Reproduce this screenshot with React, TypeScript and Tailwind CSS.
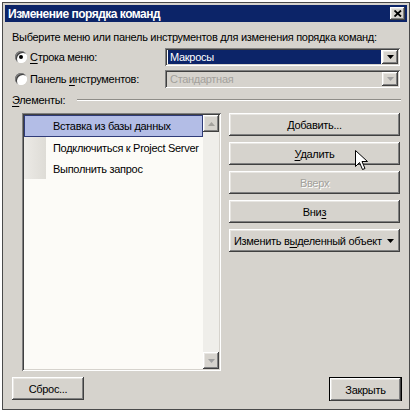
import React from "react";

const raised =
  "shadow-[inset_-1px_-1px_#404040,inset_1px_1px_#ffffff,inset_-2px_-2px_#808080,inset_2px_2px_#e8e6e2]";
const sunken =
  "shadow-[inset_1px_1px_#808080,inset_-1px_-1px_#ffffff,inset_2px_2px_#404040,inset_-2px_-2px_#d6d3cd]";

function U({ children }: { children: React.ReactNode }) {
  return <span className="underline underline-offset-[1.5px]">{children}</span>;
}

function Arrow({ disabled }: { disabled?: boolean }) {
  return (
    <svg width="7" height="4" viewBox="0 0 7 4" className="shrink-0">
      <path d="M0 0h7L3.5 4z" fill={disabled ? "#a0a0a0" : "#000"} />
    </svg>
  );
}

function Radio({ checked }: { checked?: boolean }) {
  return (
    <div className="w-[12px] h-[12px] shrink-0 rounded-full bg-white relative shadow-[inset_1px_1px_#808080,inset_-1px_-1px_#ffffff,inset_2px_2px_#404040]">
      {checked && (
        <div className="absolute left-[4px] top-[4px] w-[4px] h-[4px] rounded-full bg-black" />
      )}
    </div>
  );
}

function Combo({ text, disabled }: { text: string; disabled?: boolean }) {
  return (
    <div className={`w-[235px] h-[18px] flex p-[2px] ${sunken} ${disabled ? "bg-[#d6d3cd]" : "bg-white"}`}>
      <div className="flex-1 flex items-center pl-[1px]">
        <div
          className={`h-full flex-1 flex items-center pl-[2px] mr-[1px] ${
            disabled ? "text-[#a3a19c]" : "bg-[#0c2468] text-white"
          }`}
        >
          {text}
        </div>
      </div>
      <div className={`w-[16px] h-full flex items-center justify-center bg-[#d6d3cd] ${raised}`}>
        <Arrow disabled={disabled} />
      </div>
    </div>
  );
}

function Btn({
  children,
  disabled,
  className = "",
}: {
  children: React.ReactNode;
  disabled?: boolean;
  className?: string;
}) {
  return (
    <div
      className={`h-[23px] flex items-center justify-center whitespace-nowrap bg-[#d6d3cd] ${raised} ${
        disabled ? "text-[#a3a19c] [text-shadow:1px_1px_#ffffff]" : "text-black"
      } ${className}`}
    >
      {children}
    </div>
  );
}

export default function App() {
  return (
    <div
      className="w-[412px] h-[414px] bg-white pt-[2px] pl-[2px] relative text-[11px] tracking-[-0.3px] leading-[14px] text-black"
      style={{ fontFamily: '"Liberation Sans", Arial, sans-serif' }}
    >
      <div className="w-[408px] h-[408px] border border-[#4a4a4a] bg-[#d6d3cd] p-[2px] flex flex-col">
        {/* title bar */}
        <div className="h-[17px] bg-[#0c2468] flex items-center justify-between pl-[3px] pr-[2px]">
          <span className="text-white font-bold text-[12px] tracking-[-0.5px]">Изменение порядка команд</span>
          <div className={`w-[15px] h-[13px] bg-[#d6d3cd] flex items-center justify-center ${raised}`}>
            <svg width="8" height="7" viewBox="0 0 8 7">
              <path d="M0.5 0.5L7 6.5M7 0.5L0.5 6.5" stroke="#000" strokeWidth="1.8" />
            </svg>
          </div>
        </div>

        {/* body */}
        <div className="flex flex-col pl-[7px] pr-[5px] pt-[8px]">
          <div className="h-[14px] flex items-center whitespace-nowrap tracking-[-0.3px]">
            Выберите меню или панель инструментов для изменения порядка команд:
          </div>

          <div className="mt-[4px] flex items-center">
            <div className="w-[153px] flex items-center pl-[3px] gap-[3px]">
              <Radio checked />
              <span>
                <U>С</U>трока меню:
              </span>
            </div>
            <Combo text="Макросы" />
          </div>

          <div className="mt-[4px] flex items-center">
            <div className="w-[153px] flex items-center pl-[3px] gap-[3px]">
              <Radio />
              <span>
                Панель <U>и</U>нструментов:
              </span>
            </div>
            <Combo text="Стандартная" disabled />
          </div>

          <div className="mt-[5px] h-[14px] flex items-center">
            <span>
              <U>Э</U>лементы:
            </span>
            <div className="flex-1 ml-[12px] mr-[1px] h-[2px] border-t border-[#8f8d88] border-b border-b-white" />
          </div>

          <div className="mt-[6px] flex">
            {/* list box */}
            <div className={`ml-[10px] w-[199px] h-[258px] shrink-0 bg-[#fcfbf7] p-[2px] flex ${sunken}`}>
              <div className="flex-1 min-w-0 overflow-hidden flex flex-col">
                <div className="h-[22px] flex items-center bg-[#b3bde6] border border-[#2f3b78] pl-[28px] whitespace-nowrap">
                  Вставка из базы данных
                </div>
                <div className="h-[21px] flex items-center">
                  <div className="w-[22px] h-full shrink-0 bg-gradient-to-r from-[#eceae6] to-[#dedcd6]" />
                  <span className="pl-[7px] whitespace-nowrap">Подключиться к Project Server</span>
                </div>
                <div className="h-[21px] flex items-center">
                  <div className="w-[22px] h-full shrink-0 bg-gradient-to-r from-[#eceae6] to-[#dedcd6]" />
                  <span className="pl-[7px] whitespace-nowrap">Выполнить запрос</span>
                </div>
              </div>
              {/* scrollbar */}
              <div className="w-[16px] shrink-0 flex flex-col bg-[#efeeea]">
                <div className={`h-[17px] bg-[#d6d3cd] flex items-center justify-center ${raised}`}>
                  <svg width="7" height="4" viewBox="0 0 7 4">
                    <path d="M0 4h7L3.5 0z" fill="#a3a19c" />
                  </svg>
                </div>
                <div className="flex-1" />
                <div className={`h-[17px] bg-[#d6d3cd] flex items-center justify-center ${raised}`}>
                  <Arrow disabled />
                </div>
              </div>
            </div>

            {/* buttons */}
            <div className="ml-[8px] w-[171px] shrink-0 flex flex-col gap-[6px]">
              <Btn>
                <span>
                  <U>Д</U>обавить...
                </span>
              </Btn>
              <Btn>
                <span>
                  <U>У</U>далить
                </span>
              </Btn>
              <Btn disabled>Вверх</Btn>
              <Btn>
                <span>
                  Вни<U>з</U>
                </span>
              </Btn>
              <Btn className="!justify-between pl-[5px] pr-[6px]">
                <span>
                  Изменить в<U>ы</U>деленный объект
                </span>
                <Arrow />
              </Btn>
            </div>
          </div>

          <div className="mt-[6px] flex justify-between">
            <Btn className="w-[72px]">Сброс...</Btn>
            <div className="w-[73px] h-[24px] border border-black">
              <Btn className="h-[22px]">Закрыть</Btn>
            </div>
          </div>
        </div>
      </div>

      {/* mouse cursor */}
      <svg className="absolute left-[355px] top-[150px]" width="13" height="21" viewBox="0 0 13 21">
        <path
          d="M0.5 0.5V16.5L4.5 12.5L7.5 19.5L10 18.5L7 11.5H12.5Z"
          fill="#fff"
          stroke="#000"
          strokeWidth="1"
          strokeLinejoin="round"
        />
      </svg>
    </div>
  );
}
